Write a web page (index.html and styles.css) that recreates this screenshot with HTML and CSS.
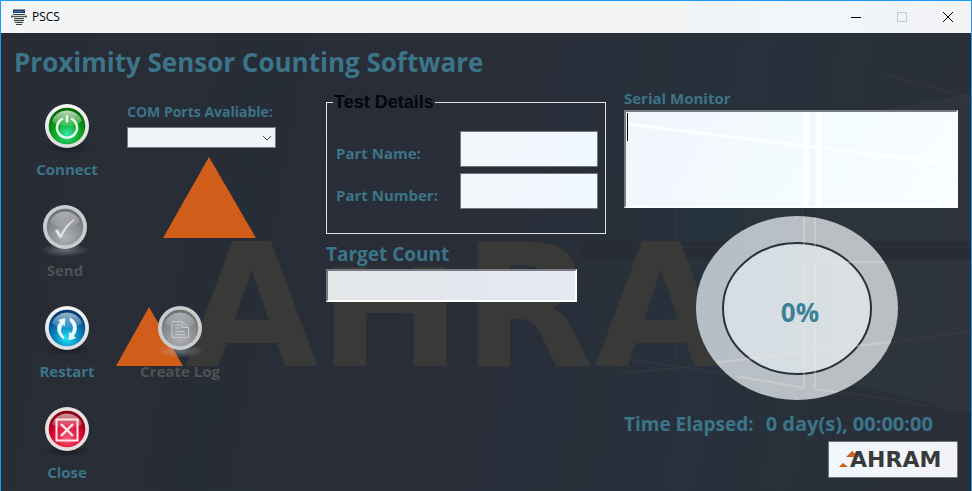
FILE: index.html
```html
<!DOCTYPE html>
<html lang="en">
<head>
<meta charset="utf-8">
<meta name="viewport" content="width=device-width, initial-scale=1">
<title>PSCS</title>
<link rel="stylesheet" href="styles.css">
</head>
<body>
<div class="window">
  <header class="titlebar">
    <svg class="app-icon" viewBox="0 0 16 16" aria-hidden="true">
      <path d="M2 .5h12" stroke="#8d9297"/>
      <path d="M2 1h12v3H2z" fill="#20374f"/>
      <path d="M3 2.500h9" stroke="#2c86e8"/>
      <path d="M3 5h10v9H3z" fill="#d5dada"/>
      <path d="M2 5.500h12M3 9.500h10M3 11.500h10M4 13.500h8M5 15.500h6" stroke="#35413f"/>
      <path d="M0 7.500h16M1 6v3M15 6v3" stroke="#4c5957"/>
    </svg>
    <span class="app-name">PSCS</span>
    <div class="window-buttons">
      <button type="button" aria-label="Minimize"><svg viewBox="0 0 12 12"><path d="M1 6.500h10"/></svg></button>
      <button type="button" aria-label="Maximize" disabled><svg viewBox="0 0 12 12"><path d="M1.500 1.500h9v9h-9z"/></svg></button>
      <button type="button" aria-label="Close window"><svg viewBox="0 0 12 12"><path d="M1 1l10 10M11 1L1 11"/></svg></button>
    </div>
  </header>

  <main class="content">
    <svg class="backdrop" viewBox="0 0 970 457" preserveAspectRatio="xMinYMin meet" aria-hidden="true">
      <defs>
        <linearGradient id="pane" x1="0" x2="1"><stop offset="0" stop-color="#26343d"/><stop offset="1" stop-color="#32373e"/></linearGradient>
        <clipPath id="mark"><path d="M0 0h866v457H0z"/></clipPath>
      </defs>
      <path d="M675 108l127-18v124H675zM817 88l153-27v153H817zM675 229h127v113l-127-14zM817 229h153v150l-153-35z" fill="url(#pane)" opacity=".7"/>
      <path d="M580 208h390v18H580z" fill="#282b36" opacity=".7"/>
      <g fill="none" stroke="#6b5850" opacity=".22">
        <path d="M675 108v106h127V90M817 88v126h153M675 332V229h127v113M817 342V229h153M620 340q130-10 350-42M620 325l350 54M880 40l90 25"/>
      </g>
      <path d="M208 124l47 81h-93zM148 274l34 59h-67z" fill="#d05e1a"/>
      <g clip-path="url(#mark)"><text class="mark" x="184" y="333">AHRAM</text></g>
    </svg>

    <svg class="symbols" aria-hidden="true">
      <defs>
        <radialGradient id="green" cy=".72" r=".65"><stop offset="0" stop-color="#35e8b0"/><stop offset=".5" stop-color="#0eac25"/><stop offset="1" stop-color="#026b02"/></radialGradient>
        <radialGradient id="blue" cy=".78" r=".7"><stop offset="0" stop-color="#20e4f4"/><stop offset=".5" stop-color="#0783c0"/><stop offset="1" stop-color="#053d78"/></radialGradient>
        <radialGradient id="red" cy=".75" r=".65"><stop offset="0" stop-color="#f75c7c"/><stop offset=".6" stop-color="#d9092f"/><stop offset="1" stop-color="#8d0014"/></radialGradient>
        <radialGradient id="gray" cy=".78" r=".7"><stop offset="0" stop-color="#b1b3b5"/><stop offset=".6" stop-color="#8c8f92"/><stop offset="1" stop-color="#707376"/></radialGradient>
        <linearGradient id="gloss" x1="0" x2="0" y1="0" y2="1"><stop offset="0" stop-color="#fff" stop-opacity=".75"/><stop offset="1" stop-color="#fff" stop-opacity=".12"/></linearGradient>
        <linearGradient id="rim" x1="0" x2="0" y1="0" y2="1"><stop offset="0" stop-color="#f6f6f6"/><stop offset="1" stop-color="#dcdcdf"/></linearGradient>
        <radialGradient id="shade"><stop offset="0" stop-color="#15181e" stop-opacity=".7"/><stop offset="1" stop-color="#15181e" stop-opacity="0"/></radialGradient>
        <radialGradient id="glow"><stop offset="0" stop-color="#b9bcc0" stop-opacity=".45"/><stop offset="1" stop-color="#b9bcc0" stop-opacity="0"/></radialGradient>
      </defs>
    </svg>

    <h1>Proximity Sensor Counting Software</h1>

    <div class="board">
      <button type="button" class="action">
        <svg viewBox="0 0 44 44" aria-hidden="true">
          <ellipse cx="22" cy="44" rx="24" ry="6" fill="url(#shade)"/>
          <circle cx="22" cy="22" r="22" fill="url(#rim)"/><circle cx="22" cy="22" r="18.300" fill="url(#green)"/>
          <path d="M7 17a15.500 14 0 0 1 30 0q-5 5-15 5t-15-5z" fill="url(#gloss)"/>
          <path d="M18 14.500a10 10 0 1 0 8 0M22 11.500v7" fill="none" stroke="#f2fff4" stroke-width="2.400"/>
        </svg>
        <span>Connect</span>
      </button>
      <div class="field ports">
        <label for="ports">COM Ports Avaliable:</label>
        <select id="ports"><option></option></select>
      </div>
      <button type="button" class="action send" disabled>
        <svg viewBox="0 0 44 44" aria-hidden="true">
          <ellipse cx="22" cy="45" rx="24" ry="7" fill="url(#glow)"/>
          <circle cx="22" cy="22" r="22" fill="#cbccce"/><circle cx="22" cy="22" r="18.300" fill="url(#gray)"/>
          <path d="M7 17a15.500 14 0 0 1 30 0q-5 5-15 5t-15-5z" fill="url(#gloss)" opacity=".55"/>
          <path d="M12 25.500l3-1 2.500 5Q22 20 31 14l1 .5Q23 22 18.500 33h-2z" fill="#e2e3e5"/>
        </svg>
        <span>Send</span>
      </button>
      <button type="button" class="action restart">
        <svg viewBox="0 0 44 44" aria-hidden="true">
          <ellipse cx="22" cy="44" rx="24" ry="6" fill="url(#shade)"/>
          <circle cx="22" cy="22" r="22" fill="url(#rim)"/><circle cx="22" cy="22" r="18.300" fill="url(#blue)"/>
          <path d="M7 17a15.500 14 0 0 1 30 0q-5 5-15 5t-15-5z" fill="url(#gloss)" opacity=".8"/>
          <path d="M19 33Q12 29 12.500 21q.5-3 3-5l-2-2 6.500-1.500L19.500 20l-1.500-2q-5 7 1 13zM25 12q7 3 6.500 11-.5 4-3 7l2 2-6.500 2 .5-8 1.500 2q5-7-1-13z" fill="#eefaff" stroke="#eefaff" stroke-width=".6"/>
        </svg>
        <span>Restart</span>
      </button>
      <button type="button" class="action log" disabled>
        <svg viewBox="0 0 44 44" aria-hidden="true">
          <ellipse cx="22" cy="45" rx="24" ry="7" fill="url(#glow)"/>
          <circle cx="22" cy="22" r="22" fill="#cbccce"/><circle cx="22" cy="22" r="18.300" fill="url(#gray)"/>
          <path d="M7 17a15.500 14 0 0 1 30 0q-5 5-15 5t-15-5z" fill="url(#gloss)" opacity=".55"/>
          <path d="M14 15.500h10l6.500 6v10H14zM24 15.500v6h6.500M17 19h5M17 22h5M17 25.500h10M17 28.500h10" fill="none" stroke="#c6c8ca"/>
        </svg>
        <span>Create Log</span>
      </button>
      <button type="button" class="action close">
        <svg viewBox="0 0 44 44" aria-hidden="true">
          <ellipse cx="22" cy="44" rx="24" ry="6" fill="url(#shade)"/>
          <circle cx="22" cy="22" r="22" fill="#ecdfe1"/><circle cx="22" cy="22" r="18.300" fill="url(#red)"/>
          <path d="M7 17a15.500 14 0 0 1 30 0q-5 5-15 5t-15-5z" fill="url(#gloss)" opacity=".8"/>
          <path d="M11.500 12.500h21v21h-21z" fill="none" stroke="#ffe9ed" stroke-width="2"/>
          <path d="M16 17l12 12M28 17L16 29" stroke="#ffe9ed" stroke-width="2.400"/>
        </svg>
        <span>Close</span>
      </button>

      <section class="details">
        <fieldset>
          <legend>Test Details</legend>
          <label for="part-name">Part Name:</label>
          <input id="part-name" type="text">
          <label for="part-number">Part Number:</label>
          <input id="part-number" type="text">
        </fieldset>
        <div class="target">
          <label for="target">Target Count</label>
          <input id="target" type="text">
        </div>
      </section>

      <section class="monitor">
        <label for="serial">Serial Monitor</label>
        <textarea id="serial"></textarea>
        <svg class="meter" viewBox="0 0 202 184" role="img" aria-label="Progress 0%">
          <defs>
            <clipPath id="dial"><ellipse cx="101" cy="92" rx="101" ry="92"/></clipPath>
            <linearGradient id="ring"><stop offset="0" stop-color="#b6bfc6"/><stop offset="1" stop-color="#bbbfc2"/></linearGradient>
            <linearGradient id="face"><stop offset="0" stop-color="#d5dde4"/><stop offset="1" stop-color="#dae0e2"/></linearGradient>
          </defs>
          <ellipse cx="101" cy="92" rx="101" ry="92" fill="url(#ring)"/>
          <ellipse cx="101" cy="92.500" rx="74" ry="65.500" fill="url(#face)" stroke="#29323c" stroke-width="2"/>
          <g clip-path="url(#dial)" fill="none" stroke="#f1e8e2" stroke-width="2" opacity=".3">
            <path d="M108 0v35M119 0v35M108 45v127M119 172V46h83M0 149l202-24M40 160l68 12M119 173l60 8"/>
          </g>
          <text x="104" y="106" text-anchor="middle">0%</text>
        </svg>
        <p class="elapsed"><span>Time Elapsed:</span><span class="clock">0 day(s), 00:00:00</span></p>
        <div class="brand">
          <svg viewBox="0 0 128 35" role="img" aria-label="AHRAM">
            <path d="M23 9l7 6H17zM14 21l5 4H10z" fill="#d05e1a"/>
            <text x="21" y="25">AHRAM</text>
          </svg>
        </div>
      </section>
    </div>
  </main>
</div>
</body>
</html>
```
FILE: styles.css
```css
* { box-sizing: border-box; }

body {
  margin: 0;
  font-family: "Open Sans", "Noto Sans", sans-serif;
  font-size: 15px;
  font-weight: 700;
  line-height: 20px;
  color: #3c7489;
}

button, input, select, textarea { font: inherit; color: #222; margin: 0; }

.window {
  display: flex;
  flex-direction: column;
  min-height: 100vh;
  border: 1px solid #1a9df0;
  background: #282d36;
}

.titlebar {
  display: flex;
  align-items: center;
  height: 32px;
  padding-left: 10px;
  gap: 5px;
  background: linear-gradient(90deg, #f2f4f6 0 70%, #f0f6fa 85%, #f3f3f5);
  color: #000;
  font-size: 12px;
  font-weight: 400;
}

.app-icon { width: 16px; height: 16px; }

.window-buttons { display: flex; margin-left: auto; }

.window-buttons button {
  display: grid;
  place-items: center;
  width: 46px;
  height: 31px;
  padding: 0;
  border: 0;
  background: none;
}

.window-buttons svg { width: 12px; height: 12px; fill: none; stroke: #000; }
.window-buttons button:disabled svg { stroke: #c3c5c7; }

.content {
  position: relative;
  flex: 1;
  padding: 11px 13px 12px;
  background: linear-gradient(100deg, #292c35 0%, #272d36 25%, #292e39 50%, #27313b 72%, #2a2e37 100%);
}

.backdrop { position: absolute; top: 0; left: 0; width: 100%; height: 100%; }
.symbols { position: absolute; width: 0; height: 0; }

.mark {
  font: 700 172px "DejaVu Sans", sans-serif;
  fill: #393937;
}

h1 {
  position: relative;
  margin: 0 0 8px;
  font-size: 26px;
  line-height: 36px;
}

.board {
  position: relative;
  display: grid;
  grid-template-columns: 113fr 199fr 298fr 334fr;
  grid-template-rows: repeat(4, auto);
  align-items: start;
}

.action {
  grid-column: 1;
  display: flex;
  flex-direction: column;
  align-items: center;
  gap: 11px;
  width: 106px;
  height: 101px;
  padding: 16px 0 0;
  border: 0;
  background: none;
  color: #3c7489;
}

.action:disabled { color: #505254; }
.action svg { width: 44px; height: 44px; overflow: visible; }
.send { width: 102px; }
.restart { grid-row: 3; }
.log { grid-column: 2; grid-row: 3; }
.close { grid-row: 4; }

.ports { grid-column: 2; grid-row: 1; width: 149px; padding-top: 14px; }

label { display: block; white-space: nowrap; }
.ports label { font-size: 14px; }

select {
  display: block;
  width: 100%;
  height: 21px;
  margin-top: 5px;
  padding: 0;
  border: 1px solid #777b80;
  border-radius: 0;
  appearance: none;
  background: #f1f5f9 url("data:image/svg+xml,%3Csvg xmlns='http://www.w3.org/2000/svg' width='10' height='6'%3E%3Cpath d='M1 1l4 4 4-4' fill='none' stroke='%23444'/%3E%3C/svg%3E") no-repeat right 3px center;
}

.details { grid-column: 3; grid-row: 1 / 5; }

fieldset {
  display: grid;
  grid-template-columns: 1fr 138px;
  gap: 6px;
  align-items: center;
  margin: 0 18px 0 0;
  padding: 15px 7px 24px 9px;
  border: 1px solid #dfe3e6;
}

legend {
  margin-left: -3px;
  padding: 0 1px;
  font: 700 18px/28px "Liberation Sans Narrow", "Liberation Sans", sans-serif;
  color: #03060a;
}

fieldset label { padding-top: 8px; }

fieldset input {
  width: 100%;
  height: 36px;
  border: 1px solid #70757b;
  background: linear-gradient(100deg, #f3f6fb, #f0f8ff);
}

.target { margin-top: 7px; }

.target label {
  width: 123px;
  font-size: 19px;
  line-height: 26px;
  background: #282d38;
}

.target input {
  display: block;
  width: 251px;
  height: 33px;
  margin-top: 2px;
  border: 2px solid;
  border-color: #777b80 #fff #fff #777b80;
  background: linear-gradient(90deg, #e3e7ea, #e4e8f1);
}

.monitor {
  grid-column: 4;
  grid-row: 1 / 5;
  display: flex;
  flex-direction: column;
}

textarea {
  width: 100%;
  height: 98px;
  margin-top: 2px;
  padding: 1px;
  border: 2px solid;
  border-color: #777b80 #fff #fff #777b80;
  outline: 0;
  resize: none;
  font-size: 20px;
  line-height: 28px;
  background:
    linear-gradient(#000, #000) 1px 1px / 1px 28px no-repeat,
    linear-gradient(7deg, transparent 59%, #fff 61%, transparent 63%),
    linear-gradient(90deg, transparent 54%, #fff 54% 55%, #f0f6fc 56% 57%, #fff 58% 59%, transparent 59%),
    linear-gradient(120deg, #f0f5fc, #f4fcff 60%, #fbfdff);
}

.meter {
  align-self: center;
  width: 202px;
  height: 184px;
  margin: 8px 0 0 12px;
}

.meter text { font: 700 26px "Open Sans", sans-serif; fill: #3d8199; }

.elapsed {
  display: flex;
  gap: 12px;
  margin: 11px 0 0;
  font-size: 19px;
  line-height: 26px;
  white-space: nowrap;
}

.clock { font-size: 20px; }

.brand {
  align-self: flex-end;
  width: 130px;
  height: 37px;
  margin-top: 4px;
  border: 1px solid #6d7278;
  background: linear-gradient(100deg, #f0f7fd, #f3f3f6);
}

.brand svg { display: block; width: 100%; height: 100%; }
.brand text { font: 700 22px "DejaVu Sans", sans-serif; fill: #393a39; }
```
